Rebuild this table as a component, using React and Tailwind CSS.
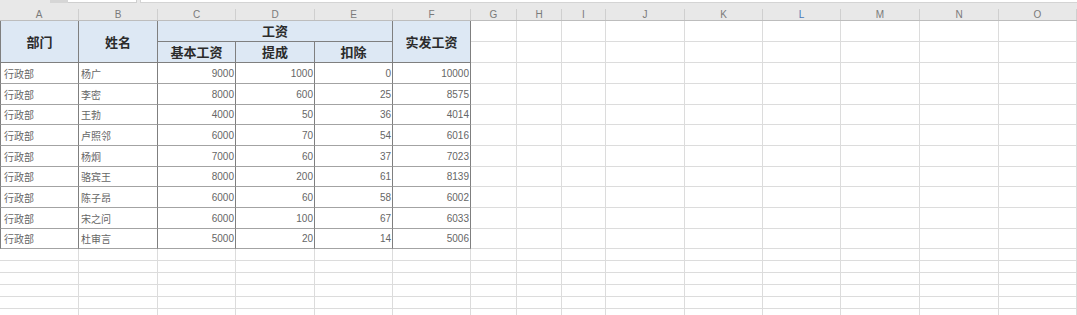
import React from 'react';

// Spreadsheet snapshot: payroll table (工资表)
const COLS = ['A', 'B', 'C', 'D', 'E', 'F', 'G', 'H', 'I', 'J', 'K', 'L', 'M', 'N', 'O'];

const ROWS = [
  ['行政部', '杨广', 9000, 1000, 0, 10000],
  ['行政部', '李密', 8000, 600, 25, 8575],
  ['行政部', '王勃', 4000, 50, 36, 4014],
  ['行政部', '卢照邻', 6000, 70, 54, 6016],
  ['行政部', '杨炯', 7000, 60, 37, 7023],
  ['行政部', '骆宾王', 8000, 200, 61, 8139],
  ['行政部', '陈子昂', 6000, 60, 58, 6002],
  ['行政部', '宋之问', 6000, 100, 67, 6033],
  ['行政部', '杜审言', 5000, 20, 14, 5006],
];

const ROW_H = ['h-[21px]', 'h-[21px]', 'h-[20px]', 'h-[21px]', 'h-[21px]', 'h-[20px]', 'h-[21px]', 'h-[21px]', 'h-[20px]'];

const GRID = 'grid grid-cols-[79px_79px_78px_79px_78px_78px_46px_45px_44px_79px_78px_78px_79px_79px_78px]';

const cjk = { fontFamily: '"Noto Sans CJK SC", "Noto Sans", sans-serif' };
const num = { fontFamily: '"Liberation Sans", Arial, sans-serif' };

function HeaderCell({ children, className = '' }) {
  return (
    <div
      className={`flex items-center justify-center bg-[#dde8f4] border-r border-b border-[#7f7f7f] text-[13px] font-bold text-[#2b2b2b] ${className}`}
      style={cjk}
    >
      {children}
    </div>
  );
}

function EmptyCell({ h }) {
  return <div className={`${h} border-r border-b border-[#dcdcdc] bg-white`} />;
}

export default function App() {
  return (
    <div className="w-[1077px] h-[315px] overflow-hidden bg-white">
      {/* formula bar remnants */}
      <div className="flex h-[3px] bg-[#e8e8e8]">
        <div className="w-[50px]" />
        <div className="w-[18px] bg-[#d6d6d6]" />
        <div className="w-[69px] bg-white border-r border-b border-[#cfcfcf]" />
        <div className="w-[3px]" />
        <div className="flex-1 bg-white border-l border-b border-[#d4d4d4]" />
      </div>

      {/* column letters */}
      <div className={`${GRID} h-[18px] bg-[#e8e8e8] border-b border-[#bdbdbd]`}>
        {COLS.map((c) => (
          <div key={c} className="flex items-end">
            <div
              className={`h-[11px] w-full border-r border-[#cfcfcf] text-center text-[10px] leading-[11px] ${c === 'L' ? 'text-[#4a78b8]' : 'text-[#7a7a7a]'}`}
              style={num}
            >
              {c}
            </div>
          </div>
        ))}
      </div>

      {/* sheet body */}
      <div className={`${GRID} grid-rows-[21px_21px]`}>
        <HeaderCell className="row-span-2 border-l">部门</HeaderCell>
        <HeaderCell className="row-span-2">姓名</HeaderCell>
        <HeaderCell className="col-span-3">工资</HeaderCell>
        <HeaderCell className="row-span-2">实发工资</HeaderCell>
        {COLS.slice(6).map((c) => (
          <EmptyCell key={`h1${c}`} h="h-[21px]" />
        ))}
        <HeaderCell>基本工资</HeaderCell>
        <HeaderCell>提成</HeaderCell>
        <HeaderCell>扣除</HeaderCell>
        {COLS.slice(6).map((c) => (
          <EmptyCell key={`h2${c}`} h="h-[21px]" />
        ))}
      </div>

      <div className={GRID}>
        {ROWS.map((r, i) => (
          <React.Fragment key={i}>
            <div
              className={`${ROW_H[i]} flex items-center pl-[3px] border-l border-r border-b border-r-[#7f7f7f] border-l-[#7f7f7f] border-b-[#a3a3a3] text-[10px] text-[#666]`}
              style={cjk}
            >
              {r[0]}
            </div>
            <div
              className={`${ROW_H[i]} flex items-center pl-[2px] border-r border-b border-r-[#7f7f7f] border-b-[#a3a3a3] text-[10px] text-[#666]`}
              style={cjk}
            >
              {r[1]}
            </div>
            {r.slice(2).map((v, j) => (
              <div
                key={j}
                className={`${ROW_H[i]} flex items-center justify-end pr-[1px] border-r border-b border-r-[#7f7f7f] border-b-[#a3a3a3] text-[10px] text-[#666]`}
                style={num}
              >
                {v}
              </div>
            ))}
            {COLS.slice(6).map((c) => (
              <EmptyCell key={c} h={ROW_H[i]} />
            ))}
          </React.Fragment>
        ))}
        {[0, 1, 2, 3, 4, 5].map((i) =>
          COLS.map((c) => <EmptyCell key={`e${i}${c}`} h="h-[12px]" />)
        )}
      </div>
    </div>
  );
}
